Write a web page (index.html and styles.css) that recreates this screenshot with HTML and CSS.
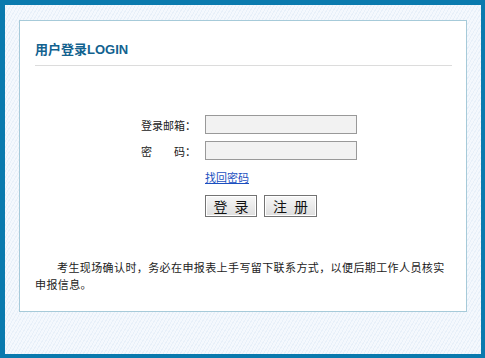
FILE: index.html
```html
<!DOCTYPE html>
<html lang="zh-CN">
<head>
  <meta charset="UTF-8" />
  <title>用户登录</title>
  <link rel="stylesheet" href="styles.css">
</head>
<body>
  <div class="frame">
    <div class="panel">
      <h2 class="title">用户登录LOGIN</h2>

      <form class="login-form">
        <div class="row">
          <label>登录邮箱：</label>
          <input type="text" name="email" />
        </div>
        <div class="row">
          <label>密&emsp;&emsp;码：</label>
          <input type="password" name="password" />
        </div>
        <div class="row">
          <span></span>
          <a href="#" class="forgot">找回密码</a>
        </div>
        <div class="row">
          <span></span>
          <div class="btns">
            <button type="submit">登 录</button>
            <button type="button">注 册</button>
          </div>
        </div>
      </form>

      <!-- 提示信息 -->
      <p class="notice">考生现场确认时，务必在申报表上手写留下联系方式，以便后期工作人员核实申报信息。</p>
    </div>
  </div>
</body>
</html>
```

FILE: styles.css
```css
* {
  margin: 0;
  padding: 0;
  box-sizing: border-box;
}

body {
  font-family: "Liberation Sans", "Noto Sans CJK SC", sans-serif;
  font-size: 12px;
  color: #333;
  background: #fff;
}

.frame {
  width: 485px;
  height: 358px;
  border-style: solid;
  border-color: #0a7aae;
  border-width: 5px 4px 4px 5px;
  padding: 15px 14px 0 14px;
  background: repeating-linear-gradient(
    -60deg,
    #f4f8fd 0,
    #f4f8fd 2px,
    #e8f0f9 2px,
    #e8f0f9 3px
  );
}

.panel {
  width: 448px;
  height: 292px;
  background: #fff;
  border: 1px solid #a6cad9;
  padding: 0 14px 0 15px;
}

.title {
  margin-top: 19px;
  font-size: 13px;
  line-height: 20px;
  font-weight: bold;
  color: #12628f;
  padding-bottom: 5px;
  border-bottom: 1px solid #dcdcdc;
}

.login-form {
  margin-top: 49px;
}

.row {
  display: grid;
  grid-template-columns: 161px 1fr;
  column-gap: 9px;
  align-items: center;
  margin-bottom: 7px;
}

.row label {
  text-align: right;
  font-family: "Noto Sans CJK SC", sans-serif;
  font-size: 11px;
  color: #222;
}

.row input {
  width: 152px;
  height: 19px;
  border: 1px solid #999;
  background: #f2f2f2;
  outline: none;
}

.forgot {
  font-family: "Noto Sans CJK SC", sans-serif;
  font-size: 11px;
  color: #1a4fc0;
  line-height: 16px;
  margin-top: 2px;
}

.btns {
  display: flex;
  gap: 7px;
  margin-top: 3px;
}

.btns button {
  width: 52px;
  height: 22px;
  border: 1px solid #737373;
  box-shadow: inset 0 0 0 1px #fff;
  background: linear-gradient(#f7f7f7, #dedede);
  font-family: "Noto Sans CJK SC", sans-serif;
  font-size: 14px;
  line-height: 18px;
  letter-spacing: 2px;
  text-indent: 2px;
  color: #111;
}

.btns button + button {
  width: 53px;
}

.notice {
  margin-top: 42px;
  font-family: "Noto Sans CJK SC", sans-serif;
  font-size: 11px;
  line-height: 17px;
  letter-spacing: 0.4px;
  text-indent: 22px;
  color: #222;
}
```
